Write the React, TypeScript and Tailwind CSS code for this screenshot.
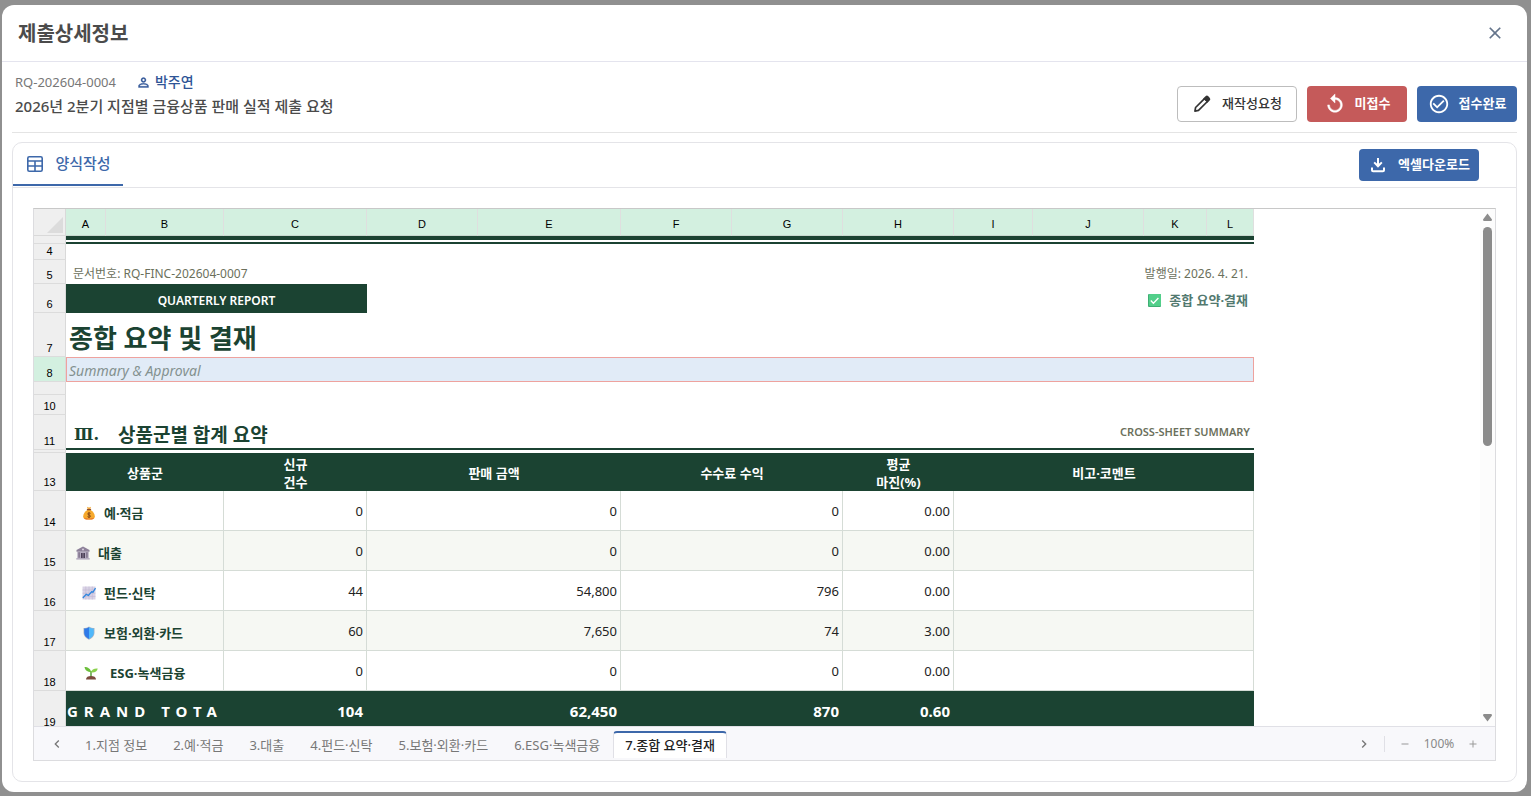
import { MdCheckCircleOutline, MdChevronLeft, MdChevronRight, MdPersonOutline, MdReplay, MdClose, MdAdd, MdRemove } from "react-icons/md";

const EditIcon = () => (
  <svg className="w-5 h-5" viewBox="0 0 24 24" fill="none" aria-hidden="true">
    <path d="M3.500 20.500l.8-4.300L15 5.500l3.500 3.500L7.800 19.700z" stroke="currentColor" strokeWidth="2" strokeLinejoin="round" />
    <path d="M13.500 5.500l2.700-2.700a2.400 2.400 0 0 1 3.400 0l1.600 1.600a2.400 2.400 0 0 1 0 3.400l-2.700 2.700z" fill="currentColor" />
  </svg>
);

const DownloadIcon = () => (
  <svg className="w-5 h-5" viewBox="0 0 20 20" fill="none" aria-hidden="true">
    <path d="M4 12.500v2.700c0 .7.500 1.100 1.100 1.100h9.800c.6 0 1.100-.4 1.100-1.100v-2.700M10 3v8" stroke="currentColor" strokeWidth="2" />
    <path d="M5.500 8l1.300-1.200L10 9.400l3.200-2.600L14.500 8 10 12.700z" fill="currentColor" />
  </svg>
);

const TableIcon = () => (
  <svg className="w-4 h-4" viewBox="0 0 16 16" fill="none" stroke="currentColor" strokeWidth="1.600" aria-hidden="true">
    <rect x="0.800" y="0.800" width="14.400" height="14.400" rx="1.500" />
    <path d="M1 5h14M1 10h14M8 5v10" />
  </svg>
);

const MoneyBag = () => (
  <svg className="w-[14px] h-[14px]" viewBox="0 0 14 14" aria-hidden="true">
    <path d="M5 .8c1.300.8 2.700.8 4 0L8.300 3.500H5.700z" fill="#f2a93b" />
    <path d="M5.300 4h3.400C11 5.500 12.800 8 12.800 10.300c0 2.200-1.300 3.200-3.300 3.200h-5c-2 0-3.300-1-3.300-3.200C1.200 8 3 5.500 5.300 4z" fill="#f6a92c" />
    <path d="M2 11.500c2 1.400 8 1.400 10 0-.5 1.400-1.500 2-3 2H5c-1.500 0-2.500-.6-3-2z" fill="#e8742a" />
    <rect x="4.800" y="3" width="4.400" height="1.200" rx=".6" fill="#8a4b2a" />
    <path d="M8.500 7.400c-.8-.8-2.800-.6-2.800.6s2.800.8 2.800 2.100-2.200 1.400-3 .5M7 6.300v5.600" stroke="#7a3f16" strokeWidth=".9" fill="none" />
  </svg>
);

const Bank = () => (
  <svg className="w-[14px] h-[14px]" viewBox="0 0 14 14" aria-hidden="true">
    <path d="M7 .5L13.500 4v1.800H.5V4z" fill="#8d8199" />
    <path d="M1.300 5.800h11.400v6.400H1.300z" fill="#b5abc0" />
    <path d="M2.400 6.200h1.400v5.600H2.400zM10.200 6.200h1.400v5.600h-1.400z" fill="#7c7088" />
    <path d="M5 7h4v5.200H5z" fill="#4c4058" />
    <path d="M6.700 7h.6v5.200h-.6z" fill="#b5abc0" />
    <circle cx="7" cy="3.600" r="1" fill="#d9d2e0" />
    <path d="M.3 12.200h13.400v1.300H.3z" fill="#a89db5" />
  </svg>
);

const Chart = () => (
  <svg className="w-[14px] h-[14px]" viewBox="0 0 14 14" aria-hidden="true">
    <rect x=".5" y=".5" width="13" height="13" fill="#d9d3e6" />
    <path d="M.5 4h13M.5 7.200h13M.5 10.400h13M3.800.5v13M7 .5v13M10.300.5v13" stroke="#c0b6d2" strokeWidth=".6" />
    <path d="M.8 12l3.400-3.600 2.200 1 3.200-3.600 1.400.4L13.500 2" stroke="#2f86dd" strokeWidth="1.300" fill="none" />
  </svg>
);

const Shield = () => (
  <svg className="w-[14px] h-[14px]" viewBox="0 0 14 14" aria-hidden="true">
    <path d="M7 .5C5.500 1.600 3.500 2 1.500 2v5c0 3 2.500 5.300 5.500 6.700 3-1.400 5.500-3.700 5.500-6.700V2c-2 0-4-.4-5.500-1.500z" fill="#a9b3c4" />
    <path d="M7 1.200C5.600 2.100 4 2.500 2.200 2.600V7c0 2.600 2 4.600 4.800 6z" fill="#2f7be8" />
    <path d="M7 1.200c1.400.9 3 1.300 4.800 1.400V7c0 2.600-2 4.600-4.800 6z" fill="#4fb8fa" />
  </svg>
);

const Seedling = () => (
  <svg className="w-[14px] h-[14px]" viewBox="0 0 14 14" aria-hidden="true">
    <path d="M7 11V5" stroke="#4f9a2f" strokeWidth="1.400" />
    <path d="M7.200 6C6.600 3 4 1 .5 1c.3 3 3 5 6.700 5z" fill="#6cbf3c" />
    <path d="M7 6.500c.4-2.700 3-4.300 6.700-4-.4 2.900-3 4.500-6.700 4z" fill="#8ad14c" />
    <path d="M2 13.500c0-2.400 2.200-3.500 5-3.500s5 1.100 5 3.500z" fill="#7b4a3e" />
  </svg>
);

const CheckBadge = () => (
  <svg className="w-[13px] h-[13px]" viewBox="0 0 13 13" aria-hidden="true">
    <rect width="13" height="13" rx="1" fill="#3fae74" />
    <rect x="1" width="12" height="12" rx="1" fill="#52cf8a" />
    <path d="M2.800 6.500l2.600 2.700 5-5.200" stroke="#fff" strokeWidth="1.300" fill="none" />
  </svg>
);

const columns = [
  { name: 'A', width: 'w-10' },
  { name: 'B', width: 'w-[118px]' },
  { name: 'C', width: 'w-[143px]' },
  { name: 'D', width: 'w-[111px]' },
  { name: 'E', width: 'w-[143px]' },
  { name: 'F', width: 'w-[111px]' },
  { name: 'G', width: 'w-[111px]' },
  { name: 'H', width: 'w-[111px]' },
  { name: 'I', width: 'w-[79px]' },
  { name: 'J', width: 'w-[111px]' },
  { name: 'K', width: 'w-[63px]' },
  { name: 'L', width: 'w-[47px]' },
];

const products = [
  { row: 14, icon: <MoneyBag />, name: '예·적금', count: '0', amount: '0', fee: '0', margin: '0.00', pad: 'pl-4 gap-2' },
  { row: 15, icon: <Bank />, name: '대출', count: '0', amount: '0', fee: '0', margin: '0.00', pad: 'pl-[10px] gap-2' },
  { row: 16, icon: <Chart />, name: '펀드·신탁', count: '44', amount: '54,800', fee: '796', margin: '0.00', pad: 'pl-4 gap-2' },
  { row: 17, icon: <Shield />, name: '보험·외환·카드', count: '60', amount: '7,650', fee: '74', margin: '3.00', pad: 'pl-4 gap-2' },
  { row: 18, icon: <Seedling />, name: 'ESG·녹색금융', count: '0', amount: '0', fee: '0', margin: '0.00', pad: 'pl-[18px] gap-3' },
];

const tabs = ['1.지점 정보', '2.예·적금', '3.대출', '4.펀드·신탁', '5.보험·외환·카드', '6.ESG·녹색금융', '7.종합 요약·결재'];

const RowHead = ({ n, active }: { n?: number; active?: boolean }) => (
  <th
    scope="row"
    className={`border-r border-b border-r-[#d9d9d9] border-b-[#dcdcdc] text-center align-bottom font-['Liberation_Sans'] text-[11px] leading-3 font-normal text-black ${active ? 'bg-[#d3f0e0]' : 'bg-[#efefef]'}`}
  >
    {n && <span className="block pb-0.5">{n}</span>}
  </th>
);

const Sheet = () => (
  <table className="w-[1220px] table-fixed border-separate border-spacing-0 text-[13px] leading-[18px] text-[#222]">
    <colgroup>
      <col className="w-8" />
      {columns.map((c) => <col key={c.name} className={c.width} />)}
    </colgroup>
    <thead>
      <tr className="h-[27px]">
        <td className="border-r border-b border-[#d9d9d9] bg-[#efefef] align-bottom">
          <svg className="ml-auto mr-0.5 mb-0.5 w-4 h-4" viewBox="0 0 16 16" aria-hidden="true"><path d="M16 0v16H0z" fill="#dcdcdc" /></svg>
        </td>
        {columns.map((c) => (
          <th key={c.name} scope="col" className="border-r border-b border-r-[#dfdfdf] border-b-[#c8d8cf] bg-[#d3f0e0] pt-1 font-['Liberation_Sans'] text-[11px] leading-3 font-normal text-black">{c.name}</th>
        ))}
      </tr>
    </thead>
    <tbody>
      <tr className="h-2">
        <RowHead />
        <td colSpan={12} className="h-2 p-0">
          <div className="h-1 bg-[#1b4332]"></div>
          <div className="mt-0.5 h-0.5 bg-[#1b4332]"></div>
        </td>
      </tr>
      <tr className="h-4"><RowHead n={4} /><td colSpan={12}></td></tr>
      <tr className="h-6 text-xs text-[#6b705c]">
        <RowHead n={5} />
        <td colSpan={6} className="pt-[3px] pl-[7px]">문서번호: RQ-FINC-202604-0007</td>
        <td colSpan={6} className="pt-[3px] pr-[6px] text-right">발행일: 2026. 4. 21.</td>
      </tr>
      <tr className="h-[29px]">
        <RowHead n={6} />
        <td colSpan={3} className="bg-[#1b4332] pt-1 text-center text-xs font-semibold text-white">QUARTERLY REPORT</td>
        <td colSpan={9} className="pt-[3px] pr-[6px]">
          <div className="flex items-center justify-end gap-2 font-bold text-[#52796f]"><CheckBadge />종합 요약·결재</div>
        </td>
      </tr>
      <tr className="h-11">
        <RowHead n={7} />
        <td colSpan={12} className="pt-1.5 pl-[3px]"><h2 className="text-[26px] leading-9 font-bold text-[#1b4332]">종합 요약 및 결재</h2></td>
      </tr>
      <tr className="h-[25px]">
        <RowHead n={8} active />
        <td colSpan={12} className="border border-[#eea29e] bg-[#e1ebf7] pt-[3px] pl-0.5 text-sm leading-5 text-[#84918f] italic">Summary &amp; Approval</td>
      </tr>
      <tr className="h-[13px]"><RowHead /><td colSpan={12}></td></tr>
      <tr className="h-5"><RowHead n={10} /><td colSpan={12}></td></tr>
      <tr className="h-[35px]">
        <RowHead n={11} />
        <td colSpan={6} className="border-b-2 border-[#1b4332] pt-1.5 pl-2 leading-none">
          <h3 className="flex gap-5 text-[19px] leading-6 font-bold text-[#1b4332]"><span className="w-6 font-['DejaVu_Serif',serif] text-base leading-6 whitespace-nowrap">Ⅲ.</span>상품군별 합계 요약</h3>
        </td>
        <td colSpan={6} className="border-b-2 border-[#1b4332] pr-1 text-right text-[11px] font-semibold text-[#6b705c]">CROSS-SHEET SUMMARY</td>
      </tr>
      <tr className="h-[3px]"><RowHead /><td colSpan={12}></td></tr>
      <tr className="h-[38px] bg-[#1b4332] text-center font-bold text-white">
        <RowHead n={13} />
        <td colSpan={2} className="pt-0.5">상품군</td>
        <td className="pt-0.5">신규<br />건수</td>
        <td colSpan={2} className="pt-0.5">판매 금액</td>
        <td colSpan={2} className="pt-0.5">수수료 수익</td>
        <td className="pt-0.5">평균<br />마진(%)</td>
        <td colSpan={4} className="pt-0.5">비고·코멘트</td>
      </tr>
      {products.map((p) => (
        <tr key={p.row} className={`h-10 text-right [&>td]:border-[#d5dcd6] ${p.row % 2 ? 'bg-[#f6f8f3]' : 'bg-white'}`}>
          <RowHead n={p.row} />
          <td colSpan={2} className="border-r border-b pt-1"><div className={`flex items-center font-bold text-[#1b4332] ${p.pad}`}>{p.icon}{p.name}</div></td>
          <td className="border-r border-b pr-[3px]">{p.count}</td>
          <td colSpan={2} className="border-r border-b pr-[3px]">{p.amount}</td>
          <td colSpan={2} className="border-r border-b pr-[3px]">{p.fee}</td>
          <td className="border-r border-b pr-[3px]">{p.margin}</td>
          <td colSpan={4} className="border-r border-b"></td>
        </tr>
      ))}
      <tr className="h-10 bg-[#1b4332] text-right text-[15px] font-bold text-white">
        <RowHead n={19} />
        <td colSpan={2} className="overflow-hidden pl-px text-left tracking-[6px] whitespace-nowrap">GRAND TOTA</td>
        <td className="pr-1">104</td>
        <td colSpan={2} className="pr-1">62,450</td>
        <td colSpan={2} className="pr-1">870</td>
        <td className="pr-1">0.60</td>
        <td colSpan={4}></td>
      </tr>
    </tbody>
  </table>
);

const App = () => {
  return (
    <div className="flex h-screen bg-[#909090] pt-[5px] pr-1 pb-1 pl-0.5 font-['Noto_Sans','Noto_Sans_CJK_KR',sans-serif] text-[13px]">
      <div role="dialog" aria-labelledby="title" className="flex min-w-0 flex-1 flex-col rounded-xl bg-white">
        <header className="flex h-[57px] shrink-0 items-center justify-between border-b border-[#e4e4ee] pr-[22px] pl-4">
          <h1 id="title" className="pt-0.5 text-xl font-bold text-[#4b4b4b]">제출상세정보</h1>
          <button type="button" aria-label="닫기" className="text-[#64748b]"><MdClose size={20} /></button>
        </header>

        <main className="flex min-h-0 flex-1 flex-col px-[10px] pb-[10px]">
          <section className="flex h-[71px] shrink-0 items-center justify-between border-b border-[#e4e4e4]">
            <div className="pb-[6px] pl-[3px]">
              <div className="flex items-center gap-5 leading-6">
                <span className="text-[#777]">RQ-202604-0004</span>
                <span className="flex items-center gap-1 font-medium text-[#2f5597] text-sm leading-6"><MdPersonOutline size={15} className="[&>path:last-child]:stroke-current [&>path:last-child]:stroke-[0.5]" />박주연</span>
              </div>
              <p className="text-[15px] leading-6 font-medium text-[#4b4b4b]">2026년 2분기 지점별 금융상품 판매 실적 제출 요청</p>
            </div>
            <div className="flex gap-[10px] pt-[14px] font-bold">
              <button type="button" className="flex h-9 w-[120px] items-center justify-center gap-[10px] rounded border border-[#bdbdbd] bg-white font-medium text-[#333]"><EditIcon />재작성요청</button>
              <button type="button" className="flex h-9 w-[100px] items-center justify-center gap-[9px] rounded bg-[#c55a5a] text-white"><MdReplay size={22} className="[&>path:last-child]:stroke-current [&>path:last-child]:stroke-[0.5]" />미접수</button>
              <button type="button" className="flex h-9 w-[100px] items-center justify-center gap-[9px] rounded bg-[#3d68aa] text-white"><MdCheckCircleOutline size={22} />접수완료</button>
            </div>
          </section>

          <section className="mt-[9px] flex min-h-0 flex-1 flex-col rounded-[10px] border border-[#e4e4e8]">
            <div className="flex h-[45px] shrink-0 items-start justify-between border-b border-[#e4e4e8] pr-[37px]">
              <button type="button" className="flex h-[43px] w-[110px] items-center justify-center gap-3 border-b-2 border-[#3d68aa] pl-0.5 text-[15px] font-medium text-[#3d68aa]"><TableIcon />양식작성</button>
              <button type="button" className="mt-[6px] flex h-8 w-[120px] items-center justify-center gap-[10px] rounded bg-[#3d68aa] font-bold text-white"><DownloadIcon />엑셀다운로드</button>
            </div>

            <div className="m-5 flex min-h-0 flex-1 flex-col border border-[#dcdcdf] border-t-[#c8c8c8]">
              <div className="flex min-h-0 flex-1">
                <div className="min-w-0 flex-1 overflow-hidden"><Sheet /></div>
                <div className="flex w-[15px] shrink-0 flex-col items-center bg-[#fcfcfc] py-1 text-[#8b8b8b]">
                  <svg className="w-[9px] h-2" viewBox="0 0 9 8" fill="currentColor" aria-hidden="true"><path d="M4.500.5L9 6.500 8.500 8h-8L0 6.500z" /></svg>
                  <div className="my-[6px] h-[219px] w-[9px] rounded-full bg-[#8b8b8b]"></div>
                  <svg className="mt-auto w-[9px] h-2" viewBox="0 0 9 8" fill="currentColor" aria-hidden="true"><path d="M4.500 7.500L0 1.500.5 0h8L9 1.500z" /></svg>
                </div>
              </div>

              <nav className="flex h-[34px] shrink-0 items-center border-t border-[#e0e0e6] bg-[#f8f8fb] pt-px pr-4 pl-[15px] text-[13px] text-[#777]">
                <button type="button" aria-label="이전"><MdChevronLeft size={16} /></button>
                <div className="ml-[7px] flex flex-1 self-stretch">
                  {tabs.map((t, i) => (
                    <button
                      key={t}
                      type="button"
                      className={i === 6 ? 'mt-[3px] mb-0.5 rounded-t border-x border-t-2 border-x-[#e0e0e6] border-t-[#3d68aa] bg-white px-[11px] font-medium text-[#222]' : 'mt-1 px-[13px]'}
                    >
                      {t}
                    </button>
                  ))}
                </div>
                <button type="button" aria-label="다음" className="mr-3"><MdChevronRight size={16} /></button>
                <div className="flex h-4 items-center border-l border-[#e0e0e6] pl-[14px]">
                  <button type="button" aria-label="축소"><MdRemove size={12} className="text-[#999]" /></button>
                  <span className="w-14 text-center text-xs text-[#888]">100%</span>
                  <button type="button" aria-label="확대"><MdAdd size={12} className="text-[#999]" /></button>
                </div>
              </nav>
            </div>
          </section>
        </main>
      </div>
    </div>
  );
};

export default App;
